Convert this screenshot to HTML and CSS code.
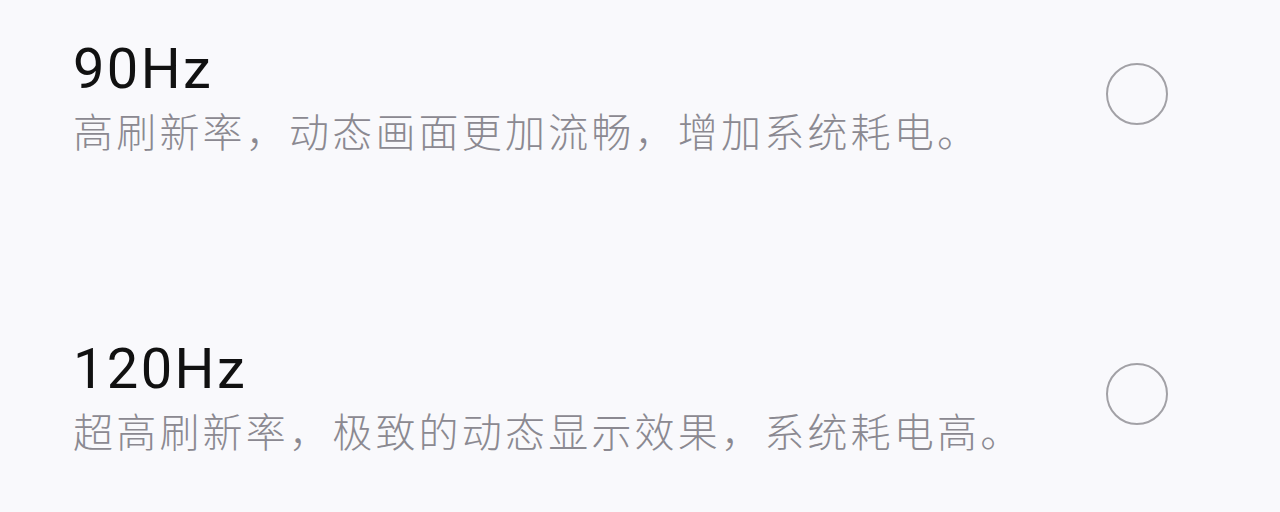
FILE: index.html
```html
<!DOCTYPE html>
<html lang="zh-CN">
<head>
    <meta charset="UTF-8">
    <meta name="viewport" content="width=device-width, initial-scale=1.0">
    <title>屏幕刷新率</title>
    <link rel="stylesheet" href="styles.css">
</head>
<body>
    <div class="rate-list">
        <div class="rate-item">
            <div class="rate-text">
                <div class="rate-title">90Hz</div>
                <div class="rate-desc">高刷新率，动态画面更加流畅，增加系统耗电。</div>
            </div>
            <div class="radio"></div>
        </div>
        <div class="rate-item">
            <div class="rate-text">
                <div class="rate-title">120Hz</div>
                <div class="rate-desc">超高刷新率，极致的动态显示效果，系统耗电高。</div>
            </div>
            <div class="radio"></div>
        </div>
    </div>
</body>
</html>
```

FILE: styles.css
```css
body {
    margin: 0;
    background-color: #f9f9fc;
    font-family: Roboto, "Noto Sans CJK SC", sans-serif;
    height: 512px;
    overflow: hidden;
}

.rate-list {
    display: flex;
    flex-direction: column;
    gap: 174px;
    padding: 36px 112px 0 73px;
}

.rate-item {
    display: flex;
    align-items: center;
    justify-content: space-between;
}

.rate-text {
    display: flex;
    flex-direction: column;
    gap: 4px;
}

.rate-title {
    font-size: 56px;
    line-height: 66px;
    letter-spacing: 2.4px;
    color: #111;
}

.rate-desc {
    font-size: 40px;
    line-height: 56px;
    font-weight: 300;
    letter-spacing: 3.2px;
    color: #8b8991;
}

/* unchecked radio ring */
.radio {
    width: 58px;
    height: 58px;
    border: 2px solid #a2a1a6;
    border-radius: 50%;
    margin-bottom: 10px;
}
```
